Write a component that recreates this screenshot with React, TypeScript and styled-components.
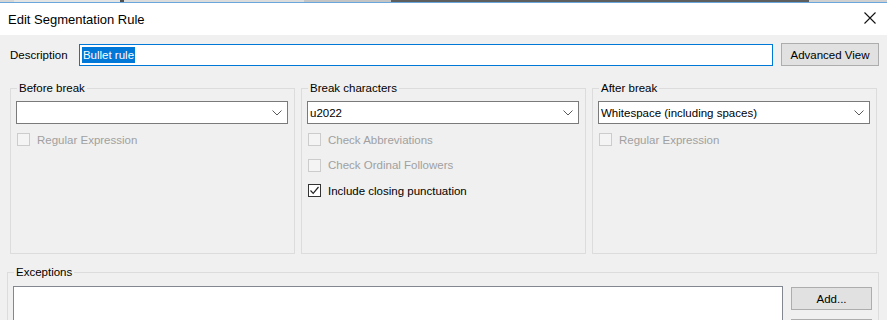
import { styled, createGlobalStyle } from 'styled-components';

const GlobalStyle = createGlobalStyle`
  html, body {
    margin: 0;
    padding: 0;
    background: #f0f0f0;
    overflow: hidden;
  }
  body {
    font-family: "Liberation Sans", Arial, sans-serif;
    font-size: 11.5px;
    color: #000;
  }
`;

const STRIP = [
  { w: 14, c: '#d6d6d6' },
  { w: 106, c: '#e4e4e4' },
  { w: 4, c: '#505050' },
  { w: 180, c: '#dcdcdc' },
  { w: 87, c: '#c4c4c4' },
  { w: 418, c: '#5e5e5e' },
  { w: 78, c: '#d0d0d0' },
];

function Chevron() {
  return (
    <svg width="10" height="6" viewBox="0 0 10 6">
      <path d="M0.5 0.5 L5 5 L9.5 0.5" fill="none" stroke="#5a5a5a" strokeWidth="1" />
    </svg>
  );
}

function CloseIcon() {
  return (
    <svg width="12" height="12" viewBox="0 0 12 12">
      <path d="M0.5 0.5 L11.5 11.5 M11.5 0.5 L0.5 11.5" stroke="#111" strokeWidth="1.1" />
    </svg>
  );
}

function Check({ label, checked, disabled }: { label: string; checked?: boolean; disabled?: boolean }) {
  return (
    <Styled.CheckRow $disabled={disabled}>
      <Styled.Box $disabled={disabled}>
        {checked && (
          <svg width="11" height="11" viewBox="0 0 11 11">
            <path d="M1.5 5.5 L4.2 8.3 L9.5 2" fill="none" stroke="#222" strokeWidth="1.2" />
          </svg>
        )}
      </Styled.Box>
      <span>{label}</span>
    </Styled.CheckRow>
  );
}

function Combo({ value }: { value?: string }) {
  return (
    <Styled.Combo>
      <span>{value}</span>
      <Chevron />
    </Styled.Combo>
  );
}

export default function App() {
  return (
    <Styled.Window>
      <GlobalStyle />
      <Styled.Strip>
        {STRIP.map(function (s, i) {
          return <Styled.Seg key={i} $w={s.w} $c={s.c} />;
        })}
      </Styled.Strip>
      <Styled.TitleBar>
        <span>Edit Segmentation Rule</span>
        <Styled.Close>
          <CloseIcon />
        </Styled.Close>
      </Styled.TitleBar>
      <Styled.Body>
        <Styled.DescRow>
          <Styled.Label>Description</Styled.Label>
          <Styled.Input>
            <Styled.Selected>Bullet rule</Styled.Selected>
          </Styled.Input>
          <Styled.Button $w={98}>Advanced View</Styled.Button>
        </Styled.DescRow>
        <Styled.Groups>
          <Styled.Group>
            <legend>Before break</legend>
            <Combo />
            <Styled.Checks>
              <Check label="Regular Expression" disabled />
            </Styled.Checks>
          </Styled.Group>
          <Styled.Group>
            <legend>Break characters</legend>
            <Combo value="u2022" />
            <Styled.Checks>
              <Check label="Check Abbreviations" disabled />
              <Check label="Check Ordinal Followers" disabled />
              <Check label="Include closing punctuation" checked />
            </Styled.Checks>
          </Styled.Group>
          <Styled.Group>
            <legend>After break</legend>
            <Combo value="Whitespace (including spaces)" />
            <Styled.Checks>
              <Check label="Regular Expression" disabled />
            </Styled.Checks>
          </Styled.Group>
        </Styled.Groups>
        <Styled.Exceptions>
          <legend>Exceptions</legend>
          <Styled.ExRow>
            <Styled.List />
            <Styled.ExButtons>
              <Styled.Button $w={81}>Add...</Styled.Button>
              <Styled.Button $w={81} aria-hidden />
            </Styled.ExButtons>
          </Styled.ExRow>
        </Styled.Exceptions>
      </Styled.Body>
    </Styled.Window>
  );
}

const Styled = {
  Window: styled.div`
    width: 887px;
    height: 320px;
    display: flex;
    flex-direction: column;
    overflow: hidden;
  `,
  Strip: styled.div`
    display: flex;
    height: 2px;
    border-bottom: 1px solid #6aa5dc;
    flex-shrink: 0;
  `,
  Seg: styled.div<{ $w: number; $c: string }>`
    width: ${(p) => p.$w}px;
    background: ${(p) => p.$c};
  `,
  TitleBar: styled.div`
    height: 32px;
    background: #fff;
    display: flex;
    align-items: center;
    justify-content: space-between;
    padding: 0 11px 0 8px;
    font-size: 13px;
    flex-shrink: 0;
  `,
  Close: styled.div`
    display: flex;
    align-items: center;
    margin-top: -3px;
  `,
  Body: styled.div`
    padding: 8px 8px 0 0;
    display: flex;
    flex-direction: column;
  `,
  DescRow: styled.div`
    display: flex;
    align-items: center;
    height: 23px;
  `,
  Label: styled.span`
    width: 69px;
    padding-left: 10px;
  `,
  Input: styled.div`
    box-sizing: border-box;
    width: 695px;
    height: 22px;
    margin-top: 1px;
    border: 1px solid #0078d7;
    background: #fff;
    display: flex;
    align-items: center;
    padding-left: 2px;
  `,
  Selected: styled.span`
    background: #0078d7;
    color: #fff;
    line-height: 16px;
    padding: 0 1px;
  `,
  Button: styled.div<{ $w: number }>`
    box-sizing: border-box;
    width: ${(p) => p.$w}px;
    height: 23px;
    margin-left: 8px;
    border: 1px solid #adadad;
    background: #e1e1e1;
    display: flex;
    align-items: center;
    justify-content: center;
    flex-shrink: 0;
  `,
  Groups: styled.div`
    display: grid;
    grid-template-columns: 285px 285px 285px;
    column-gap: 6px;
    margin: 15px 0 0 10px;
  `,
  Group: styled.fieldset`
    box-sizing: border-box;
    height: 173px;
    margin: 0;
    padding: 0 6px 0 5px;
    border: 1px solid #dcdcdc;
    min-width: 0;

    legend {
      margin-left: 1px;
      padding: 0 2px;
      line-height: 14px;
    }
  `,
  Combo: styled.div`
    box-sizing: border-box;
    height: 23px;
    margin-top: 6px;
    border: 1px solid #7a7a7a;
    background: #fff;
    display: flex;
    align-items: center;
    justify-content: space-between;
    padding: 0 5px 0 2px;
  `,
  Checks: styled.div`
    display: flex;
    flex-direction: column;
    gap: 12.5px;
    margin-top: 9px;
    padding-left: 1px;
  `,
  CheckRow: styled.div<{ $disabled?: boolean }>`
    display: flex;
    align-items: center;
    gap: 7px;
    height: 13px;
    color: ${(p) => (p.$disabled ? '#a0a0a0' : '#000')};
  `,
  Box: styled.div<{ $disabled?: boolean }>`
    box-sizing: border-box;
    width: 13px;
    height: 13px;
    border: 1px solid ${(p) => (p.$disabled ? '#cccccc' : '#333333')};
    background: ${(p) => (p.$disabled ? '#f4f4f4' : '#fff')};
    display: flex;
    align-items: center;
    justify-content: center;
  `,
  Exceptions: styled.fieldset`
    margin: 11px 0 0 7px;
    padding: 0 6px 0 5px;
    border: 1px solid #dcdcdc;
    height: 80px;
    min-width: 0;

    legend {
      margin-left: 1px;
      padding: 0 2px;
      line-height: 14px;
    }
  `,
  ExRow: styled.div`
    display: flex;
    margin-top: 7px;
  `,
  List: styled.div`
    width: 771px;
    height: 80px;
    box-sizing: border-box;
    border: 1px solid #828790;
    background: #fff;
  `,
  ExButtons: styled.div`
    display: flex;
    flex-direction: column;
    gap: 9px;
    padding-top: 1px;
  `,
};
